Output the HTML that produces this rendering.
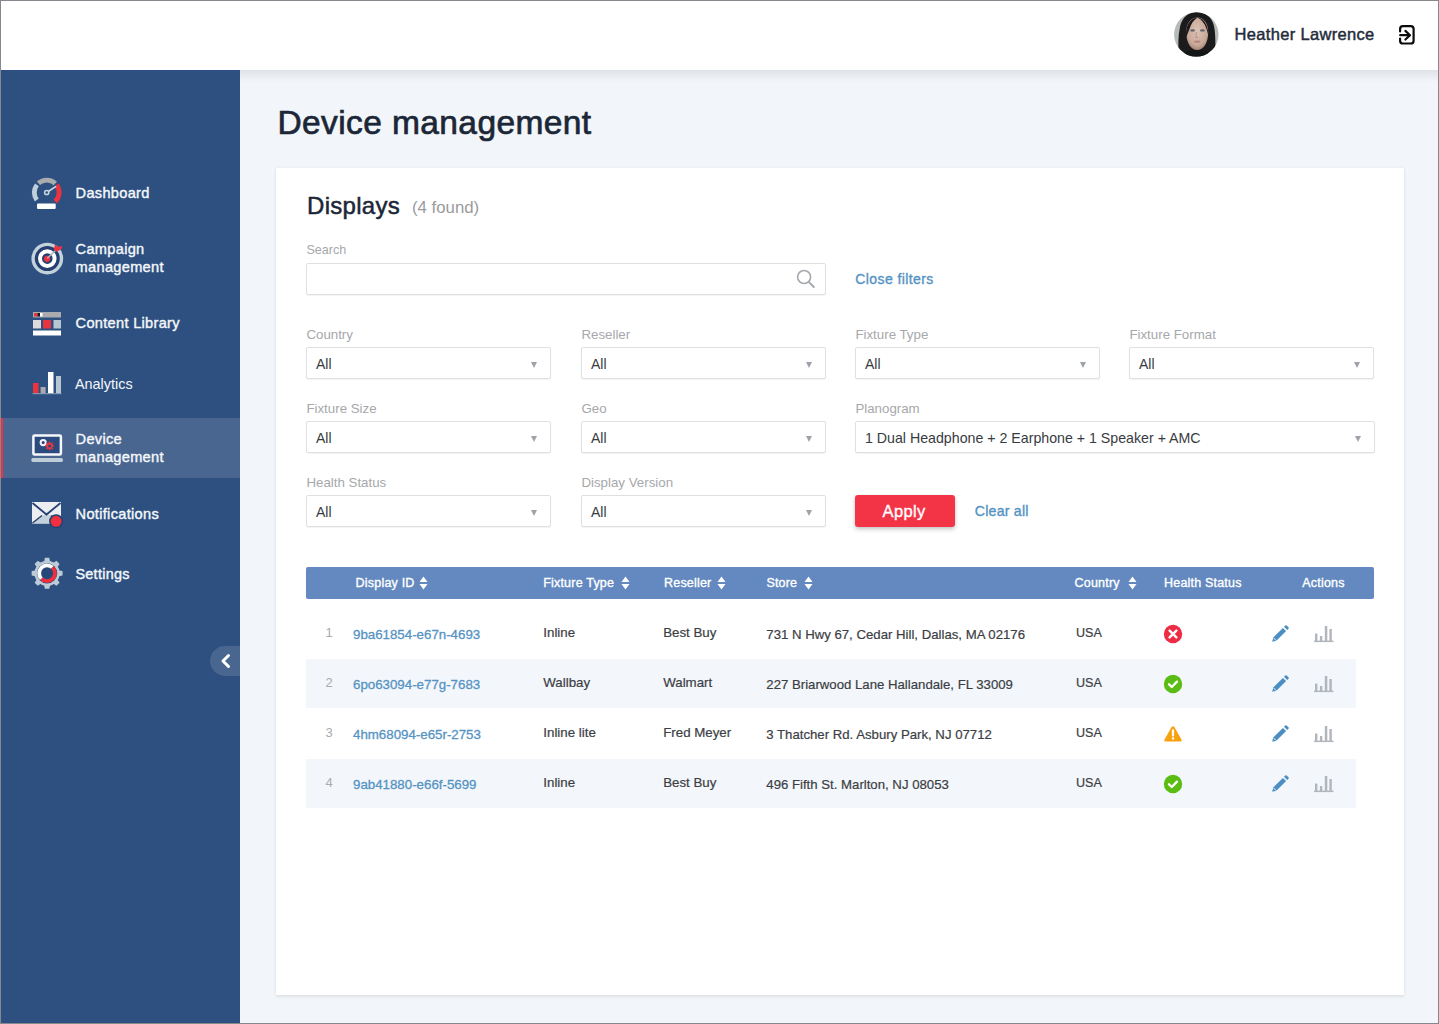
<!DOCTYPE html>
<html><head><meta charset="utf-8"><title>Device management</title>
<style>
*{box-sizing:border-box;margin:0;padding:0}
html,body{width:1439px;height:1024px;overflow:hidden;background:#f2f5f9;font-family:"Liberation Sans",sans-serif}
.t{position:absolute;white-space:nowrap}
#hdr{position:absolute;left:0;top:0;width:1439px;height:70px;background:#fff}
#hdrshadow{position:absolute;left:240px;top:70px;width:1199px;height:12px;background:linear-gradient(#dfe3e8,rgba(242,245,249,0))}
#side{position:absolute;left:0;top:70px;width:240px;height:954px;background:#2d5080}
#active{position:absolute;left:0;top:418px;width:240px;height:60px;background:#486690}
#activebar{position:absolute;left:0;top:418px;width:3px;height:60px;background:#ee3340}
#collapse{position:absolute;left:210px;top:645.5px;width:30px;height:30px;border-radius:15px 0 0 15px;background:#486690}
#card{position:absolute;left:276px;top:167.5px;width:1127.5px;height:827px;background:#fff;box-shadow:0 0 3px rgba(40,50,70,0.07),0 2px 3px rgba(40,50,70,0.07)}
.box{position:absolute;background:#fff;border:1px solid #dfe0e2;border-radius:2px;box-shadow:0 1px 1px rgba(0,0,0,0.05)}
.arr{position:absolute;width:0;height:0;border-left:3.6px solid transparent;border-right:3.6px solid transparent;border-top:6px solid #9ea3a9}
#apply{position:absolute;left:855px;top:495px;width:100px;height:32px;background:#f33447;border-radius:3px;box-shadow:0 2px 4px rgba(0,0,0,0.25)}
#thead{position:absolute;left:306px;top:567px;width:1068px;height:32px;background:#6389c0;border-radius:2px}
.stripe{position:absolute;left:306px;width:1050px;height:49px;background:#f3f7fb}
#frame{position:absolute;left:0;top:0;width:1439px;height:1024px;border:1px solid #85898e;pointer-events:none}
</style></head><body>
<div id="hdr"></div><div id="hdrshadow"></div><svg style="position:absolute;left:1174px;top:12px" width="45" height="45" viewBox="0 0 45 45">
<defs><clipPath id="av"><circle cx="22.3" cy="22.4" r="22.2"/></clipPath>
<radialGradient id="face" cx="50%" cy="42%" r="58%"><stop offset="0" stop-color="#dcc2b4"/><stop offset="0.75" stop-color="#c9a999"/><stop offset="1" stop-color="#a88575"/></radialGradient></defs>
<g clip-path="url(#av)">
<rect width="45" height="45" fill="#b6bbb8"/>
<path d="M5 45 C4 34 4 24 6 15 C8 5 15 0 23 0 C31 0 38 5 40 14 C42 24 41 34 42 45 Z" fill="#1b1a1d"/>
<path d="M12.2 20 C12.2 11 17 5.5 23.2 5.5 C29.4 5.5 34.2 11 34.2 20 C34.2 31 29.5 38 23.2 38 C17 38 12.2 31 12.2 20 Z" fill="url(#face)"/>
<path d="M12 24 C11.5 15 15 6 23.5 5.5 C19.5 8 17 12 15.5 17 C14.5 20 13.2 22 12.4 25 Z" fill="#1b1a1d"/>
<path d="M34.2 23 C34.5 15 31 6.5 23.5 5.5 C27.5 7.5 30.5 11 32.2 16 C33 18.5 33.7 20.5 34.2 23 Z" fill="#1b1a1d"/>
<ellipse cx="18.6" cy="18.4" rx="2.4" ry="1.2" fill="#60626a"/>
<ellipse cx="28.4" cy="18.4" rx="2.4" ry="1.2" fill="#60626a"/>
<path d="M22.5 20 L21.8 25.5 L24 25.5" fill="none" stroke="#b39080" stroke-width="0.8"/>
<ellipse cx="23.3" cy="29.6" rx="3.3" ry="1.2" fill="#b38580"/>
<path d="M8 45 C10 40 16 37.5 23 38 C30 37.5 36 40 38 45 Z" fill="#141517"/>
</g></svg><div class="t" style="left:1234.50px;top:26.33px;font-size:16.5px;line-height:16.5px;font-weight:400;color:#232c3a;letter-spacing:0.33px;-webkit-text-stroke:0.45px #232c3a">Heather Lawrence</div>
<svg style="position:absolute;left:1396px;top:23px" width="22" height="24" viewBox="0 0 22 24">
<path d="M4.1 8.4 V6 Q4.1 3.2 6.9 3.2 H14.8 Q17.6 3.2 17.6 6 V17.7 Q17.6 20.5 14.8 20.5 H6.9 Q4.1 20.5 4.1 17.7 V15.5" fill="none" stroke="#0c0c0c" stroke-width="2.2" stroke-linecap="round"/>
<path d="M4.2 12.2 H13.6 M9.4 7.9 L14 12.2 L9.4 16.5" fill="none" stroke="#0c0c0c" stroke-width="2.2" stroke-linecap="round" stroke-linejoin="round"/>
</svg><div id="side"></div><div id="active"></div><div id="activebar"></div><div class="t" style="left:75.60px;top:186.34px;font-size:14.6px;line-height:14.6px;font-weight:400;color:#f4f7fb;letter-spacing:0.3px;-webkit-text-stroke:0.4px #f4f7fb">Dashboard</div>
<div class="t" style="left:75.60px;top:242.24px;font-size:14.6px;line-height:14.6px;font-weight:400;color:#f4f7fb;letter-spacing:0.3px;-webkit-text-stroke:0.4px #f4f7fb">Campaign</div>
<div class="t" style="left:75.60px;top:259.94px;font-size:14.6px;line-height:14.6px;font-weight:400;color:#f4f7fb;letter-spacing:0.3px;-webkit-text-stroke:0.4px #f4f7fb">management</div>
<div class="t" style="left:75.60px;top:316.44px;font-size:14.6px;line-height:14.6px;font-weight:400;color:#f4f7fb;letter-spacing:0.3px;-webkit-text-stroke:0.4px #f4f7fb">Content Library</div>
<div class="t" style="left:75.00px;top:376.61px;font-size:14.4px;line-height:14.4px;font-weight:400;color:#f4f7fb;">Analytics</div>
<div class="t" style="left:75.60px;top:432.04px;font-size:14.6px;line-height:14.6px;font-weight:400;color:#f4f7fb;letter-spacing:0.3px;-webkit-text-stroke:0.4px #f4f7fb">Device</div>
<div class="t" style="left:75.60px;top:449.84px;font-size:14.6px;line-height:14.6px;font-weight:400;color:#f4f7fb;letter-spacing:0.3px;-webkit-text-stroke:0.4px #f4f7fb">management</div>
<div class="t" style="left:75.60px;top:507.24px;font-size:14.6px;line-height:14.6px;font-weight:400;color:#f4f7fb;letter-spacing:0.3px;-webkit-text-stroke:0.4px #f4f7fb">Notifications</div>
<div class="t" style="left:75.40px;top:566.61px;font-size:14.4px;line-height:14.4px;font-weight:400;color:#f4f7fb;letter-spacing:0.3px;-webkit-text-stroke:0.4px #f4f7fb">Settings</div>
<svg style="position:absolute;left:26px;top:172px" width="42" height="42" viewBox="0 0 42 42">
<path d="M10.80 27.96 A12.4 12.4 0 0 1 10.93 12.87" fill="none" stroke="#c0cfd9" stroke-width="4.8"/>
<path d="M12.40 11.29 A12.4 12.4 0 0 1 29.31 11.58" fill="none" stroke="#a9abad" stroke-width="4.8"/>
<path d="M30.60 13.04 A12.4 12.4 0 0 1 29.16 29.57" fill="none" stroke="#ee3340" stroke-width="4.8"/>
<line x1="20.7" y1="20.5" x2="29.6" y2="14.6" stroke="#c9d6de" stroke-width="1.7" stroke-linecap="round"/>
<circle cx="20.7" cy="20.5" r="2.1" fill="#2d5080" stroke="#c9d6de" stroke-width="1.5"/>
<rect x="11" y="31.6" width="18.7" height="5.3" rx="1" fill="#ffffff"/>
</svg><svg style="position:absolute;left:26px;top:236px" width="42" height="42" viewBox="0 0 42 42">
<circle cx="21.3" cy="22.6" r="12.5" fill="#243f70"/>
<circle cx="21.3" cy="22.6" r="14.2" fill="none" stroke="#c2d1da" stroke-width="3.4"/>
<circle cx="21.3" cy="22.6" r="7.3" fill="none" stroke="#ffffff" stroke-width="4"/>
<circle cx="21.1" cy="22.8" r="3.1" fill="#ee3340"/>
<line x1="21.3" y1="22.3" x2="30" y2="14" stroke="#a9b3bb" stroke-width="1.5"/>
<path d="M29.5 8.5 L32 11 L35.6 10 L36.3 12 L33.5 14.3 L31 15.5 L28.2 14.6 L28.2 11 Z" fill="#ee3340"/>
</svg><svg style="position:absolute;left:30px;top:310px" width="34" height="30" viewBox="0 0 34 30">
<rect x="3" y="2" width="28" height="5.5" fill="#a9abae"/>
<rect x="4" y="3" width="3.5" height="3.5" fill="#e8343f"/>
<rect x="7.5" y="3" width="2.5" height="3.5" fill="#1a1a1a"/>
<rect x="10" y="3" width="2.5" height="3.5" fill="#ffffff"/>
<rect x="3" y="10" width="8" height="8.5" fill="#dcdcdc"/>
<rect x="13" y="10" width="8" height="8.5" fill="#e8343f"/>
<rect x="23.5" y="10" width="7.5" height="8.5" fill="#b7c6d2"/>
<rect x="3" y="20.5" width="28" height="5" fill="#ffffff"/>
</svg><svg style="position:absolute;left:30px;top:370px" width="34" height="26" viewBox="0 0 34 26">
<rect x="3" y="13" width="5.5" height="10.5" fill="#e8343f"/>
<rect x="10.6" y="17" width="5" height="6.5" fill="#a9abae"/>
<rect x="18" y="2" width="5.5" height="21.5" fill="#ffffff"/>
<rect x="26" y="6" width="5" height="17.5" fill="#b7c6d2"/>
<rect x="2.5" y="23.2" width="29" height="1" fill="#8ea3b8"/>
</svg><svg style="position:absolute;left:26px;top:427px" width="42" height="42" viewBox="0 0 42 42">
<rect x="7.4" y="8.4" width="27.5" height="19.2" rx="1.2" fill="#2b4a7e" stroke="#f6f8fa" stroke-width="2.5"/>
<rect x="5.4" y="30.9" width="31.5" height="4" rx="1.5" fill="#bfcdd7"/>
<circle cx="17.2" cy="15.6" r="2.6" fill="none" stroke="#f2f4f7" stroke-width="2"/>
<polygon points="26.84,18.26 28.17,18.36 28.17,19.44 26.84,19.54 26.34,20.73 27.21,21.75 26.45,22.51 25.43,21.64 24.24,22.14 24.14,23.47 23.06,23.47 22.96,22.14 21.77,21.64 20.75,22.51 19.99,21.75 20.86,20.73 20.36,19.54 19.03,19.44 19.03,18.36 20.36,18.26 20.86,17.07 19.99,16.05 20.75,15.29 21.77,16.16 22.96,15.66 23.06,14.33 24.14,14.33 24.24,15.66 25.43,16.16 26.45,15.29 27.21,16.05 26.34,17.07" fill="#ee3340"/>
<circle cx="23.6" cy="18.9" r="1.5" fill="#2b4a7e"/>
</svg><svg style="position:absolute;left:30px;top:500px" width="36" height="32" viewBox="0 0 36 32">
<path d="M2 2 H31 V23.5 H2 Z" fill="#eceef2"/>
<path d="M2 23.5 L16.5 13 L31 23.5 Z" fill="#c5d2dc"/>
<path d="M2.5 3 L16.5 14.5 L30.5 3" fill="none" stroke="#24416f" stroke-width="1.8"/>
<path d="M2.5 23 L12 15.5 M30.5 23 L21 15.5" fill="none" stroke="#24416f" stroke-width="1.5"/>
<circle cx="26.1" cy="21.3" r="7" fill="#24416f"/>
<circle cx="26.1" cy="21.3" r="5.5" fill="#f0303f"/>
</svg><svg style="position:absolute;left:26px;top:552px" width="42" height="42" viewBox="0 0 42 42">
<polygon points="32.95,18.40 36.54,19.06 36.54,23.54 32.95,24.20 31.53,27.63 33.60,30.63 30.43,33.80 27.43,31.73 24.00,33.15 23.34,36.74 18.86,36.74 18.20,33.15 14.77,31.73 11.77,33.80 8.60,30.63 10.67,27.63 9.25,24.20 5.66,23.54 5.66,19.06 9.25,18.40 10.67,14.97 8.60,11.97 11.77,8.80 14.77,10.87 18.20,9.45 18.86,5.86 23.34,5.86 24.00,9.45 27.43,10.87 30.43,8.80 33.60,11.97 31.53,14.97" fill="#bccbd6"/>
<circle cx="21.1" cy="21.3" r="12.6" fill="#bccbd6"/>
<circle cx="21.1" cy="21.3" r="10.1" fill="#27477a"/>
<path d="M15.42 26.79 A7.9 7.9 0 0 1 26.39 15.43" fill="none" stroke="#ffffff" stroke-width="3.8"/>
<path d="M26.39 15.43 A7.9 7.9 0 1 1 15.42 26.79" fill="none" stroke="#f0303f" stroke-width="3.8"/>
</svg><div id="collapse"></div><svg style="position:absolute;left:216px;top:650px" width="18" height="22" viewBox="0 0 18 22">
<path d="M12.5 5.5 L7 11 L12.5 16.5" fill="none" stroke="#fff" stroke-width="3" stroke-linecap="round" stroke-linejoin="round"/></svg><div class="t" style="left:277.50px;top:105.84px;font-size:33.5px;line-height:33.5px;font-weight:400;color:#1b2737;letter-spacing:0.4px;-webkit-text-stroke:0.7px #1b2737">Device management</div>
<div id="card"></div><div class="t" style="left:307.00px;top:194.18px;font-size:24px;line-height:24px;font-weight:400;color:#1b2737;letter-spacing:0.3px;-webkit-text-stroke:0.5px #1b2737">Displays</div>
<div class="t" style="left:412.00px;top:200.08px;font-size:16.8px;line-height:16.8px;font-weight:400;color:#9a9b9d;">(4 found)</div>
<div class="t" style="left:306.40px;top:243.83px;font-size:12.6px;line-height:12.6px;font-weight:400;color:#a6a8ab;">Search</div>
<div class="box" style="left:306px;top:263px;width:520px;height:32px"></div><svg style="position:absolute;left:794px;top:268px" width="24" height="22" viewBox="0 0 24 22">
<circle cx="10.1" cy="9" r="6.5" fill="none" stroke="#a3a8ae" stroke-width="1.6"/>
<line x1="14.8" y1="13.8" x2="19.8" y2="19" stroke="#a3a8ae" stroke-width="1.9" stroke-linecap="round"/></svg><div class="t" style="left:855.30px;top:272.35px;font-size:14px;line-height:14px;font-weight:400;color:#5593c3;letter-spacing:0.4px;-webkit-text-stroke:0.35px #5593c3">Close filters</div>
<div class="t" style="left:306.40px;top:327.54px;font-size:13.3px;line-height:13.3px;font-weight:400;color:#a6a8ab;">Country</div>
<div class="box" style="left:306px;top:347px;width:245px;height:32px"></div><div class="t" style="left:316.00px;top:357.35px;font-size:14px;line-height:14px;font-weight:400;color:#383c42;">All</div>
<div class="arr" style="left:531.4px;top:361.6px"></div><div class="t" style="left:581.40px;top:327.54px;font-size:13.3px;line-height:13.3px;font-weight:400;color:#a6a8ab;">Reseller</div>
<div class="box" style="left:581px;top:347px;width:245px;height:32px"></div><div class="t" style="left:591.00px;top:357.35px;font-size:14px;line-height:14px;font-weight:400;color:#383c42;">All</div>
<div class="arr" style="left:806.4px;top:361.6px"></div><div class="t" style="left:855.40px;top:327.54px;font-size:13.3px;line-height:13.3px;font-weight:400;color:#a6a8ab;">Fixture Type</div>
<div class="box" style="left:855px;top:347px;width:245px;height:32px"></div><div class="t" style="left:865.00px;top:357.35px;font-size:14px;line-height:14px;font-weight:400;color:#383c42;">All</div>
<div class="arr" style="left:1080.4px;top:361.6px"></div><div class="t" style="left:1129.40px;top:327.54px;font-size:13.3px;line-height:13.3px;font-weight:400;color:#a6a8ab;">Fixture Format</div>
<div class="box" style="left:1129px;top:347px;width:245px;height:32px"></div><div class="t" style="left:1139.00px;top:357.35px;font-size:14px;line-height:14px;font-weight:400;color:#383c42;">All</div>
<div class="arr" style="left:1354.4px;top:361.6px"></div><div class="t" style="left:306.40px;top:401.54px;font-size:13.3px;line-height:13.3px;font-weight:400;color:#a6a8ab;">Fixture Size</div>
<div class="box" style="left:306px;top:421px;width:245px;height:32px"></div><div class="t" style="left:316.00px;top:431.35px;font-size:14px;line-height:14px;font-weight:400;color:#383c42;">All</div>
<div class="arr" style="left:531.4px;top:435.6px"></div><div class="t" style="left:581.40px;top:401.54px;font-size:13.3px;line-height:13.3px;font-weight:400;color:#a6a8ab;">Geo</div>
<div class="box" style="left:581px;top:421px;width:245px;height:32px"></div><div class="t" style="left:591.00px;top:431.35px;font-size:14px;line-height:14px;font-weight:400;color:#383c42;">All</div>
<div class="arr" style="left:806.4px;top:435.6px"></div><div class="t" style="left:855.40px;top:401.54px;font-size:13.3px;line-height:13.3px;font-weight:400;color:#a6a8ab;">Planogram</div>
<div class="box" style="left:855px;top:421px;width:520px;height:32px"></div><div class="t" style="left:865.00px;top:431.18px;font-size:14.2px;line-height:14.2px;font-weight:400;color:#383c42;">1 Dual Headphone + 2 Earphone + 1 Speaker + AMC</div>
<div class="arr" style="left:1355.4px;top:435.6px"></div><div class="t" style="left:306.40px;top:475.54px;font-size:13.3px;line-height:13.3px;font-weight:400;color:#a6a8ab;">Health Status</div>
<div class="box" style="left:306px;top:495px;width:245px;height:32px"></div><div class="t" style="left:316.00px;top:505.35px;font-size:14px;line-height:14px;font-weight:400;color:#383c42;">All</div>
<div class="arr" style="left:531.4px;top:509.6px"></div><div class="t" style="left:581.40px;top:475.54px;font-size:13.3px;line-height:13.3px;font-weight:400;color:#a6a8ab;">Display Version</div>
<div class="box" style="left:581px;top:495px;width:245px;height:32px"></div><div class="t" style="left:591.00px;top:505.35px;font-size:14px;line-height:14px;font-weight:400;color:#383c42;">All</div>
<div class="arr" style="left:806.4px;top:509.6px"></div><div id="apply"></div><div class="t" style="left:882.50px;top:502.63px;font-size:16.5px;line-height:16.5px;font-weight:400;color:#ffffff;letter-spacing:0.4px;-webkit-text-stroke:0.35px #fff">Apply</div>
<div class="t" style="left:974.80px;top:504.28px;font-size:14.2px;line-height:14.2px;font-weight:400;color:#5593c3;letter-spacing:0.2px;-webkit-text-stroke:0.35px #5593c3">Clear all</div>
<div id="thead"></div><div class="stripe" style="top:659px"></div><div class="stripe" style="top:759px"></div><div class="t" style="left:355.60px;top:576.92px;font-size:12.5px;line-height:12.5px;font-weight:400;color:#ffffff;letter-spacing:0.2px;-webkit-text-stroke:0.35px #fff">Display ID</div>
<div class="t" style="left:543.20px;top:576.92px;font-size:12.5px;line-height:12.5px;font-weight:400;color:#ffffff;letter-spacing:0.2px;-webkit-text-stroke:0.35px #fff">Fixture Type</div>
<div class="t" style="left:664.00px;top:576.92px;font-size:12.5px;line-height:12.5px;font-weight:400;color:#ffffff;letter-spacing:0.2px;-webkit-text-stroke:0.35px #fff">Reseller</div>
<div class="t" style="left:766.40px;top:576.92px;font-size:12.5px;line-height:12.5px;font-weight:400;color:#ffffff;letter-spacing:0.2px;-webkit-text-stroke:0.35px #fff">Store</div>
<div class="t" style="left:1074.60px;top:576.92px;font-size:12.5px;line-height:12.5px;font-weight:400;color:#ffffff;letter-spacing:0.2px;-webkit-text-stroke:0.35px #fff">Country</div>
<div class="t" style="left:1164.00px;top:576.92px;font-size:12.5px;line-height:12.5px;font-weight:400;color:#ffffff;letter-spacing:0.2px;-webkit-text-stroke:0.35px #fff">Health Status</div>
<div class="t" style="left:1302.30px;top:576.92px;font-size:12.5px;line-height:12.5px;font-weight:400;color:#ffffff;letter-spacing:0.2px;-webkit-text-stroke:0.35px #fff">Actions</div>
<svg style="position:absolute;left:419px;top:575px" width="9" height="16" viewBox="0 0 9 16"><path d="M0.5 7 L4.5 1.5 L8.5 7 Z M0.5 9 L4.5 14.5 L8.5 9 Z" fill="#fff"/></svg><svg style="position:absolute;left:621px;top:575px" width="9" height="16" viewBox="0 0 9 16"><path d="M0.5 7 L4.5 1.5 L8.5 7 Z M0.5 9 L4.5 14.5 L8.5 9 Z" fill="#fff"/></svg><svg style="position:absolute;left:717px;top:575px" width="9" height="16" viewBox="0 0 9 16"><path d="M0.5 7 L4.5 1.5 L8.5 7 Z M0.5 9 L4.5 14.5 L8.5 9 Z" fill="#fff"/></svg><svg style="position:absolute;left:804px;top:575px" width="9" height="16" viewBox="0 0 9 16"><path d="M0.5 7 L4.5 1.5 L8.5 7 Z M0.5 9 L4.5 14.5 L8.5 9 Z" fill="#fff"/></svg><svg style="position:absolute;left:1128px;top:575px" width="9" height="16" viewBox="0 0 9 16"><path d="M0.5 7 L4.5 1.5 L8.5 7 Z M0.5 9 L4.5 14.5 L8.5 9 Z" fill="#fff"/></svg><div class="t" style="left:325.50px;top:625.99px;font-size:13px;line-height:13px;font-weight:400;color:#a9abae;">1</div>
<div class="t" style="left:353.00px;top:627.54px;font-size:13.3px;line-height:13.3px;font-weight:400;color:#5593c3;-webkit-text-stroke:0.3px #5593c3">9ba61854-e67n-4693</div>
<div class="t" style="left:543.30px;top:625.74px;font-size:13.3px;line-height:13.3px;font-weight:400;color:#3b3e44;-webkit-text-stroke:0.2px #3b3e44">Inline</div>
<div class="t" style="left:663.20px;top:625.74px;font-size:13.3px;line-height:13.3px;font-weight:400;color:#3b3e44;-webkit-text-stroke:0.2px #3b3e44">Best Buy</div>
<div class="t" style="left:766.30px;top:627.82px;font-size:13.2px;line-height:13.2px;font-weight:400;color:#3b3e44;-webkit-text-stroke:0.2px #3b3e44">731 N Hwy 67, Cedar Hill, Dallas, MA 02176</div>
<div class="t" style="left:1076.00px;top:627.13px;font-size:12.6px;line-height:12.6px;font-weight:400;color:#3b3e44;-webkit-text-stroke:0.2px #3b3e44">USA</div>
<svg style="position:absolute;left:1163px;top:624px" width="20" height="20" viewBox="0 0 20 20"><circle cx="10" cy="10" r="9.2" fill="#ee2d45"/><path d="M6.6 6.6 L13.4 13.4 M13.4 6.6 L6.6 13.4" stroke="#fff" stroke-width="2.4" stroke-linecap="round"/></svg><svg style="position:absolute;left:1270px;top:624px" width="20" height="20" viewBox="0 0 20 20"><path d="M2.2 17.8 L3.2 13.6 L12.9 3.9 L16.1 7.1 L6.4 16.8 Z" fill="#4a8ec3"/><path d="M14 2.8 L15.3 1.5 Q16 0.9 16.7 1.5 L18.5 3.3 Q19.1 4 18.5 4.7 L17.2 6 Z" fill="#4a8ec3"/><path d="M3.3 13.7 L6.3 16.7" stroke="#fff" stroke-width="0.9"/></svg><svg style="position:absolute;left:1312px;top:624px" width="24" height="20" viewBox="0 0 24 20"><g fill="#b1b5bc"><rect x="3" y="9.6" width="2.4" height="7.4"/><rect x="7.9" y="12" width="2.4" height="5"/><rect x="12.8" y="2" width="2.5" height="15"/><rect x="17.4" y="5" width="2.4" height="12"/><rect x="2" y="16.6" width="19.5" height="1.5"/></g></svg><div class="t" style="left:325.50px;top:675.99px;font-size:13px;line-height:13px;font-weight:400;color:#a9abae;">2</div>
<div class="t" style="left:353.00px;top:677.54px;font-size:13.3px;line-height:13.3px;font-weight:400;color:#5593c3;-webkit-text-stroke:0.3px #5593c3">6po63094-e77g-7683</div>
<div class="t" style="left:543.30px;top:675.74px;font-size:13.3px;line-height:13.3px;font-weight:400;color:#3b3e44;-webkit-text-stroke:0.2px #3b3e44">Wallbay</div>
<div class="t" style="left:663.20px;top:675.74px;font-size:13.3px;line-height:13.3px;font-weight:400;color:#3b3e44;-webkit-text-stroke:0.2px #3b3e44">Walmart</div>
<div class="t" style="left:766.30px;top:677.82px;font-size:13.2px;line-height:13.2px;font-weight:400;color:#3b3e44;-webkit-text-stroke:0.2px #3b3e44">227 Briarwood Lane Hallandale, FL 33009</div>
<div class="t" style="left:1076.00px;top:677.13px;font-size:12.6px;line-height:12.6px;font-weight:400;color:#3b3e44;-webkit-text-stroke:0.2px #3b3e44">USA</div>
<svg style="position:absolute;left:1163px;top:674px" width="20" height="20" viewBox="0 0 20 20"><circle cx="10" cy="10" r="9.2" fill="#5bbd13"/><path d="M6 10.3 L8.8 13 L14 7.6" fill="none" stroke="#fff" stroke-width="2.3" stroke-linecap="round" stroke-linejoin="round"/></svg><svg style="position:absolute;left:1270px;top:674px" width="20" height="20" viewBox="0 0 20 20"><path d="M2.2 17.8 L3.2 13.6 L12.9 3.9 L16.1 7.1 L6.4 16.8 Z" fill="#4a8ec3"/><path d="M14 2.8 L15.3 1.5 Q16 0.9 16.7 1.5 L18.5 3.3 Q19.1 4 18.5 4.7 L17.2 6 Z" fill="#4a8ec3"/><path d="M3.3 13.7 L6.3 16.7" stroke="#fff" stroke-width="0.9"/></svg><svg style="position:absolute;left:1312px;top:674px" width="24" height="20" viewBox="0 0 24 20"><g fill="#b1b5bc"><rect x="3" y="9.6" width="2.4" height="7.4"/><rect x="7.9" y="12" width="2.4" height="5"/><rect x="12.8" y="2" width="2.5" height="15"/><rect x="17.4" y="5" width="2.4" height="12"/><rect x="2" y="16.6" width="19.5" height="1.5"/></g></svg><div class="t" style="left:325.50px;top:725.99px;font-size:13px;line-height:13px;font-weight:400;color:#a9abae;">3</div>
<div class="t" style="left:353.00px;top:727.54px;font-size:13.3px;line-height:13.3px;font-weight:400;color:#5593c3;-webkit-text-stroke:0.3px #5593c3">4hm68094-e65r-2753</div>
<div class="t" style="left:543.30px;top:725.74px;font-size:13.3px;line-height:13.3px;font-weight:400;color:#3b3e44;-webkit-text-stroke:0.2px #3b3e44">Inline lite</div>
<div class="t" style="left:663.20px;top:725.74px;font-size:13.3px;line-height:13.3px;font-weight:400;color:#3b3e44;-webkit-text-stroke:0.2px #3b3e44">Fred Meyer</div>
<div class="t" style="left:766.30px;top:727.82px;font-size:13.2px;line-height:13.2px;font-weight:400;color:#3b3e44;-webkit-text-stroke:0.2px #3b3e44">3 Thatcher Rd. Asbury Park, NJ 07712</div>
<div class="t" style="left:1076.00px;top:727.13px;font-size:12.6px;line-height:12.6px;font-weight:400;color:#3b3e44;-webkit-text-stroke:0.2px #3b3e44">USA</div>
<svg style="position:absolute;left:1163px;top:724px" width="20" height="20" viewBox="0 0 20 20"><path d="M10 2.2 Q10.9 2.2 11.4 3.1 L18.6 15.8 Q19.2 17.4 17.6 17.4 H2.4 Q0.8 17.4 1.4 15.8 L8.6 3.1 Q9.1 2.2 10 2.2 Z" fill="#f7a20f"/><path d="M10 6.3 V11.6" stroke="#fff" stroke-width="2.2" stroke-linecap="round"/><circle cx="10" cy="14.4" r="1.2" fill="#fff"/></svg><svg style="position:absolute;left:1270px;top:724px" width="20" height="20" viewBox="0 0 20 20"><path d="M2.2 17.8 L3.2 13.6 L12.9 3.9 L16.1 7.1 L6.4 16.8 Z" fill="#4a8ec3"/><path d="M14 2.8 L15.3 1.5 Q16 0.9 16.7 1.5 L18.5 3.3 Q19.1 4 18.5 4.7 L17.2 6 Z" fill="#4a8ec3"/><path d="M3.3 13.7 L6.3 16.7" stroke="#fff" stroke-width="0.9"/></svg><svg style="position:absolute;left:1312px;top:724px" width="24" height="20" viewBox="0 0 24 20"><g fill="#b1b5bc"><rect x="3" y="9.6" width="2.4" height="7.4"/><rect x="7.9" y="12" width="2.4" height="5"/><rect x="12.8" y="2" width="2.5" height="15"/><rect x="17.4" y="5" width="2.4" height="12"/><rect x="2" y="16.6" width="19.5" height="1.5"/></g></svg><div class="t" style="left:325.50px;top:775.99px;font-size:13px;line-height:13px;font-weight:400;color:#a9abae;">4</div>
<div class="t" style="left:353.00px;top:777.54px;font-size:13.3px;line-height:13.3px;font-weight:400;color:#5593c3;-webkit-text-stroke:0.3px #5593c3">9ab41880-e66f-5699</div>
<div class="t" style="left:543.30px;top:775.74px;font-size:13.3px;line-height:13.3px;font-weight:400;color:#3b3e44;-webkit-text-stroke:0.2px #3b3e44">Inline</div>
<div class="t" style="left:663.20px;top:775.74px;font-size:13.3px;line-height:13.3px;font-weight:400;color:#3b3e44;-webkit-text-stroke:0.2px #3b3e44">Best Buy</div>
<div class="t" style="left:766.30px;top:777.82px;font-size:13.2px;line-height:13.2px;font-weight:400;color:#3b3e44;-webkit-text-stroke:0.2px #3b3e44">496 Fifth St. Marlton, NJ 08053</div>
<div class="t" style="left:1076.00px;top:777.13px;font-size:12.6px;line-height:12.6px;font-weight:400;color:#3b3e44;-webkit-text-stroke:0.2px #3b3e44">USA</div>
<svg style="position:absolute;left:1163px;top:774px" width="20" height="20" viewBox="0 0 20 20"><circle cx="10" cy="10" r="9.2" fill="#5bbd13"/><path d="M6 10.3 L8.8 13 L14 7.6" fill="none" stroke="#fff" stroke-width="2.3" stroke-linecap="round" stroke-linejoin="round"/></svg><svg style="position:absolute;left:1270px;top:774px" width="20" height="20" viewBox="0 0 20 20"><path d="M2.2 17.8 L3.2 13.6 L12.9 3.9 L16.1 7.1 L6.4 16.8 Z" fill="#4a8ec3"/><path d="M14 2.8 L15.3 1.5 Q16 0.9 16.7 1.5 L18.5 3.3 Q19.1 4 18.5 4.7 L17.2 6 Z" fill="#4a8ec3"/><path d="M3.3 13.7 L6.3 16.7" stroke="#fff" stroke-width="0.9"/></svg><svg style="position:absolute;left:1312px;top:774px" width="24" height="20" viewBox="0 0 24 20"><g fill="#b1b5bc"><rect x="3" y="9.6" width="2.4" height="7.4"/><rect x="7.9" y="12" width="2.4" height="5"/><rect x="12.8" y="2" width="2.5" height="15"/><rect x="17.4" y="5" width="2.4" height="12"/><rect x="2" y="16.6" width="19.5" height="1.5"/></g></svg>
<div id="frame"></div>
</body></html>
